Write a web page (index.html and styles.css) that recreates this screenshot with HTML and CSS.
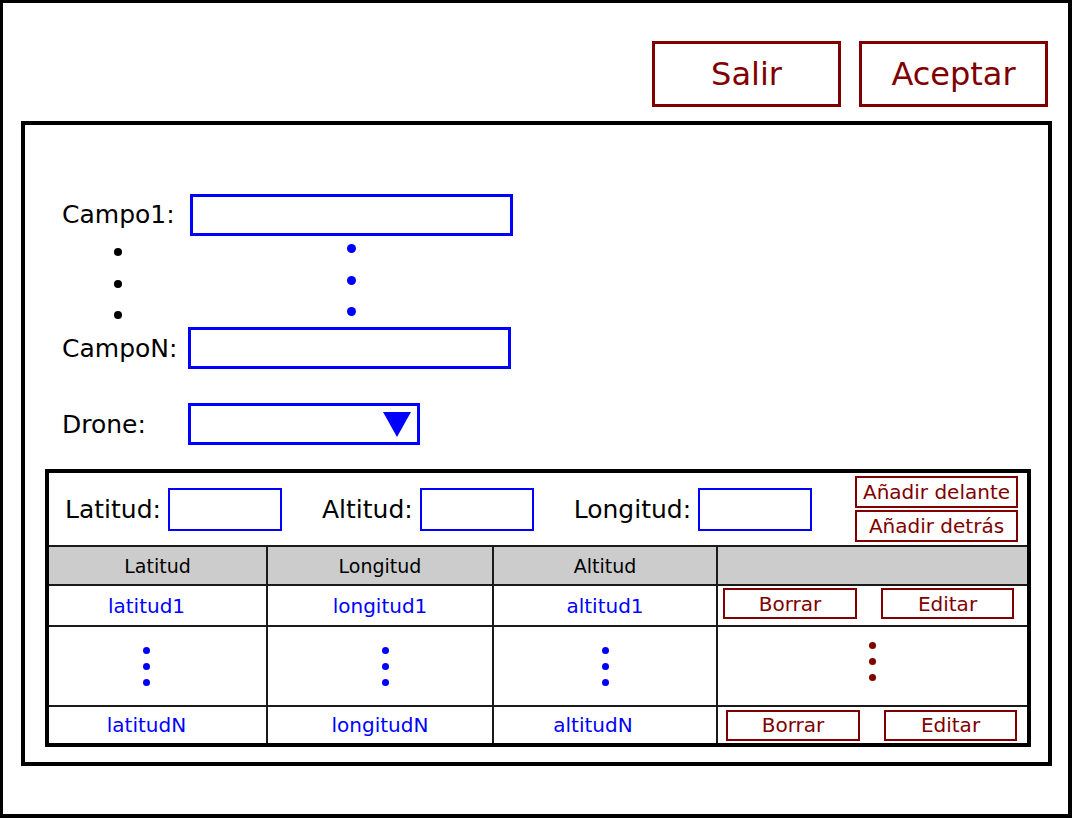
FILE: index.html
```html
<!DOCTYPE html>
<html lang="es">
<head>
    <meta charset="UTF-8">
    <meta name="viewport" content="width=device-width, initial-scale=1.0">
    <title>Ruta del dron</title>
    <link rel="stylesheet" href="styles.css">
</head>
<body>
    <div class="screen">
        <!-- botones de arriba -->
        <div class="top-bar">
            <button class="big-button">Salir</button>
            <button class="big-button">Aceptar</button>
        </div>

        <div class="panel">
            <!-- campos -->
            <div class="field-row first-row">
                <label class="field-label">Campo1:</label>
                <input class="text-box wide-box" type="text">
            </div>
            <div class="more-fields">
                <div class="dots label-dots"><span></span><span></span><span></span></div>
                <div class="dots box-dots"><span></span><span></span><span></span></div>
            </div>
            <div class="field-row">
                <label class="field-label">CampoN:</label>
                <input class="text-box wide-box" type="text">
            </div>
            <div class="field-row drone-row">
                <label class="field-label">Drone:</label>
                <div class="select-box">
                    <svg width="28" height="25" viewBox="0 0 28 25"><polygon points="0,0 28,0 14,25" fill="#0000ff"/></svg>
                </div>
            </div>

            <!-- puntos de la ruta -->
            <div class="waypoints">
                <div class="coord-bar">
                    <div class="coord">
                        <span>Latitud:</span>
                        <input class="text-box coord-box" type="text">
                    </div>
                    <div class="coord">
                        <span>Altitud:</span>
                        <input class="text-box coord-box" type="text">
                    </div>
                    <div class="coord">
                        <span>Longitud:</span>
                        <input class="text-box coord-box" type="text">
                    </div>
                    <div class="add-buttons">
                        <button class="small-button add-button">Añadir delante</button>
                        <button class="small-button add-button">Añadir detrás</button>
                    </div>
                </div>

                <div class="point-table">
                    <div class="th">Latitud</div>
                    <div class="th">Longitud</div>
                    <div class="th">Altitud</div>
                    <div class="th"></div>

                    <div class="td lat-col">latitud1</div>
                    <div class="td">longitud1</div>
                    <div class="td">altitud1</div>
                    <div class="td actions">
                        <button class="small-button row-button">Borrar</button>
                        <button class="small-button row-button">Editar</button>
                    </div>

                    <div class="td lat-col"><div class="dots cell-dots"><span></span><span></span><span></span></div></div>
                    <div class="td long-col"><div class="dots cell-dots"><span></span><span></span><span></span></div></div>
                    <div class="td"><div class="dots cell-dots"><span></span><span></span><span></span></div></div>
                    <div class="td action-dots"><div class="dots cell-dots red-dots"><span></span><span></span><span></span></div></div>

                    <div class="td lat-col">latitudN</div>
                    <div class="td">longitudN</div>
                    <div class="td alt-last">altitudN</div>
                    <div class="td actions last-actions">
                        <button class="small-button row-button">Borrar</button>
                        <button class="small-button row-button">Editar</button>
                    </div>
                </div>
            </div>
        </div>
    </div>
</body>
</html>
```

FILE: styles.css
```css
body {
    margin: 0;
    padding: 0;
    background-color: #ffffff;
    font-family: "DejaVu Sans", Verdana, sans-serif;
    color: #000000;
}
.screen {
    width: 1072px;
    height: 818px;
    box-sizing: border-box;
    border: solid #000000;
    border-width: 3px 4px 4px 3px;
    overflow: hidden;
}

/* botones de arriba */
.top-bar {
    display: flex;
    justify-content: flex-end;
    gap: 18px;
    padding: 38px 20px 0 0;
}
.big-button {
    width: 189px;
    height: 66px;
    box-sizing: border-box;
    border: 3px solid #800000;
    background-color: #ffffff;
    color: #800000;
    font-family: "DejaVu Sans", Verdana, sans-serif;
    font-size: 32px;
    padding: 0;
}

.panel {
    margin: 14px 0 0 18px;
    width: 1031px;
    height: 645px;
    box-sizing: border-box;
    border: 4px solid #000000;
    padding-left: 37px;
}

/* campos */
.field-row {
    display: grid;
    grid-template-columns: 126px auto;
    align-items: center;
    height: 42px;
}
.first-row {
    margin-top: 68px;
    height: 43px;
}
.drone-row {
    margin-top: 34px;
}
.field-label {
    font-size: 25px;
}
.text-box {
    box-sizing: border-box;
    border: 3px solid #0000ff;
    background-color: #ffffff;
    padding: 0;
    margin: 0;
    outline: none;
}
.wide-box {
    width: 323px;
    height: 43px;
}
.first-row .wide-box {
    margin-left: 2px;
}
.field-row .wide-box {
    height: 42px;
}
.select-box {
    width: 232px;
    height: 42px;
    box-sizing: border-box;
    border: 3px solid #0000ff;
    display: flex;
    justify-content: flex-end;
    align-items: flex-start;
    padding: 6px 6px 0 0;
}
.select-box svg {
    display: block;
}

.more-fields {
    height: 91px;
    display: flex;
    align-items: flex-start;
}
.dots {
    display: flex;
    flex-direction: column;
}
.dots span {
    display: block;
    border-radius: 50%;
}
.label-dots {
    margin: 12px 0 0 52px;
    gap: 23.5px;
}
.label-dots span {
    width: 8px;
    height: 8px;
    background-color: #000000;
}
.box-dots {
    margin: 8px 0 0 225px;
    gap: 22.5px;
}
.box-dots span {
    width: 9px;
    height: 9px;
    background-color: #0000ff;
}

/* puntos de la ruta */
.waypoints {
    margin: 24px 0 0 -17px;
    width: 986px;
    height: 278px;
    box-sizing: border-box;
    border: 4px solid #000000;
}
.coord-bar {
    display: flex;
    align-items: center;
    height: 72px;
    padding-left: 16px;
}
.coord {
    display: flex;
    align-items: center;
    margin-right: 40px;
    font-size: 25px;
}
.coord-box {
    width: 114px;
    height: 43px;
    border-width: 2px;
    margin-left: 7px;
}
.add-buttons {
    margin: 0 9px 0 auto;
    align-self: flex-start;
    padding-top: 3px;
    display: flex;
    flex-direction: column;
    gap: 2px;
}
.small-button {
    box-sizing: border-box;
    border: 2px solid #800000;
    background-color: #ffffff;
    color: #800000;
    font-family: "DejaVu Sans", Verdana, sans-serif;
    font-size: 20px;
    padding: 0;
}
.add-button {
    width: 163px;
    height: 32px;
}

.point-table {
    display: grid;
    grid-template-columns: 217px 224px 222px 1fr;
    grid-template-rows: 37px 39px 78px 36px;
    gap: 2px;
    border-top: 2px solid #1a1a1a;
    background-color: #1a1a1a;
}
.th {
    background-color: #cccccc;
    font-size: 19px;
    display: flex;
    align-items: center;
    justify-content: center;
}
.td {
    background-color: #ffffff;
    color: #0000ff;
    font-size: 20px;
    display: flex;
    align-items: center;
    justify-content: center;
}
.lat-col {
    padding-right: 22px;
}
.long-col {
    padding-left: 10px;
}
.alt-last {
    padding-right: 24px;
}
.cell-dots {
    gap: 9px;
}
.cell-dots span {
    width: 7px;
    height: 7px;
    background-color: #0000ff;
}
.action-dots {
    padding-bottom: 10px;
}
.red-dots span {
    background-color: #800000;
}
.actions {
    justify-content: flex-start;
    padding-left: 5px;
    gap: 24px;
}
.last-actions {
    padding-left: 8px;
}
.row-button {
    width: 134px;
    height: 31px;
}
.actions .row-button:last-child {
    width: 133px;
}
.actions:not(.last-actions) {
    padding-bottom: 4px;
}
```
